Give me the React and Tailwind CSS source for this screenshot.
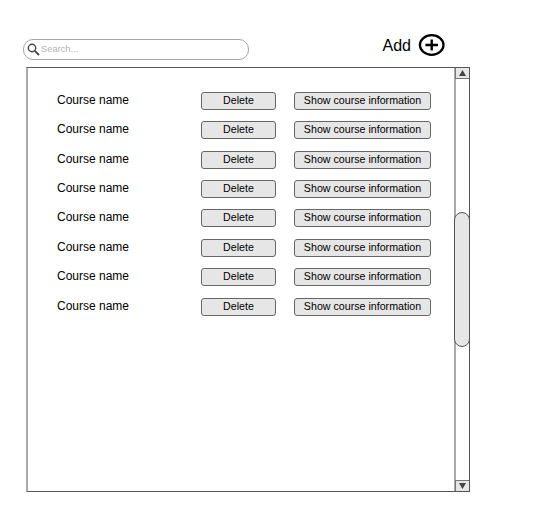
const courses = Array.from({ length: 8 }, (_, i) => ({ id: i, name: "Course name" }));

function SearchBox() {
  return (
    <div className="flex h-[21px] w-[226px] items-center rounded-[10px] border border-[#a6a6a6] bg-white pl-[3px]">
      <svg className="size-[13px] shrink-0" viewBox="0 0 13 13" fill="none" stroke="#444" strokeWidth="1.4">
        <circle cx="5" cy="5" r="3.7" />
        <path d="M7.8 7.8L12 12" strokeWidth="1.8" />
      </svg>
      <span className="ml-px text-[9.33px] leading-none text-[#b3b3b3]">Search...</span>
    </div>
  );
}

function AddButton() {
  return (
    <div className="flex items-center">
      <span className="pt-[2px] text-base leading-5">Add</span>
      <svg className="ml-[7px] h-[23px] w-[27px]" viewBox="0 0 27 23" fill="none" stroke="#000">
        <ellipse cx="13.7" cy="12" rx="11.8" ry="9.8" strokeWidth="2.3" />
        <path d="M7.4 12H20M13.7 6.4V17.6" strokeWidth="2.4" />
      </svg>
    </div>
  );
}

function Button({ children, className }) {
  return (
    <button
      className={`h-[18px] rounded-[3px] border border-[#666] bg-[#e6e6e6] text-center text-[10.67px] leading-[14px] pb-[2px] ${className}`}
    >
      {children}
    </button>
  );
}

function CourseRow({ name }) {
  return (
    <div className="flex h-[29.37px] items-start">
      <span className="w-[144px] text-xs leading-4">{name}</span>
      <Button className="w-[75px]">Delete</Button>
      <Button className="ml-[18px] w-[137px]">Show course information</Button>
    </div>
  );
}

function Scrollbar() {
  return (
    <div className="flex w-[15px] flex-col border-l-2 border-[#aaa]">
      <div className="-ml-px flex h-[11px] items-center justify-center border-b border-l border-[#777] bg-[#e6e6e6]">
        <svg className="h-[6px] w-[7px]" viewBox="0 0 7 6">
          <path d="M3.5 0L7 6H0Z" fill="#444" />
        </svg>
      </div>
      <div className="-mr-px -ml-[2px] flex-1 pt-[133px]">
        <div className="h-[135px] rounded-full border border-[#555] bg-[#e6e6e6]" />
      </div>
      <div className="-ml-px flex h-[11px] items-center justify-center border-t border-l border-[#777] bg-[#e6e6e6]">
        <svg className="h-[6px] w-[7px]" viewBox="0 0 7 6">
          <path d="M0 0H7L3.5 6Z" fill="#444" />
        </svg>
      </div>
    </div>
  );
}

export default function App() {
  return (
    <div className="h-[519px] w-[554px] bg-white pt-[33px] pl-[23px] font-['Liberation_Sans',Arial,sans-serif] text-black">
      <div className="flex h-[34px] w-[422px] items-start justify-between">
        <div className="pt-[6px]">
          <SearchBox />
        </div>
        <AddButton />
      </div>
      <div className="ml-[3px] flex h-[425px] w-[444px] border border-l-2 border-[#555] border-l-[#aaa]">
        <div className="flex-1 pt-[24px] pl-[29px]">
          {courses.map((course) => (
            <CourseRow key={course.id} name={course.name} />
          ))}
        </div>
        <Scrollbar />
      </div>
    </div>
  );
}
